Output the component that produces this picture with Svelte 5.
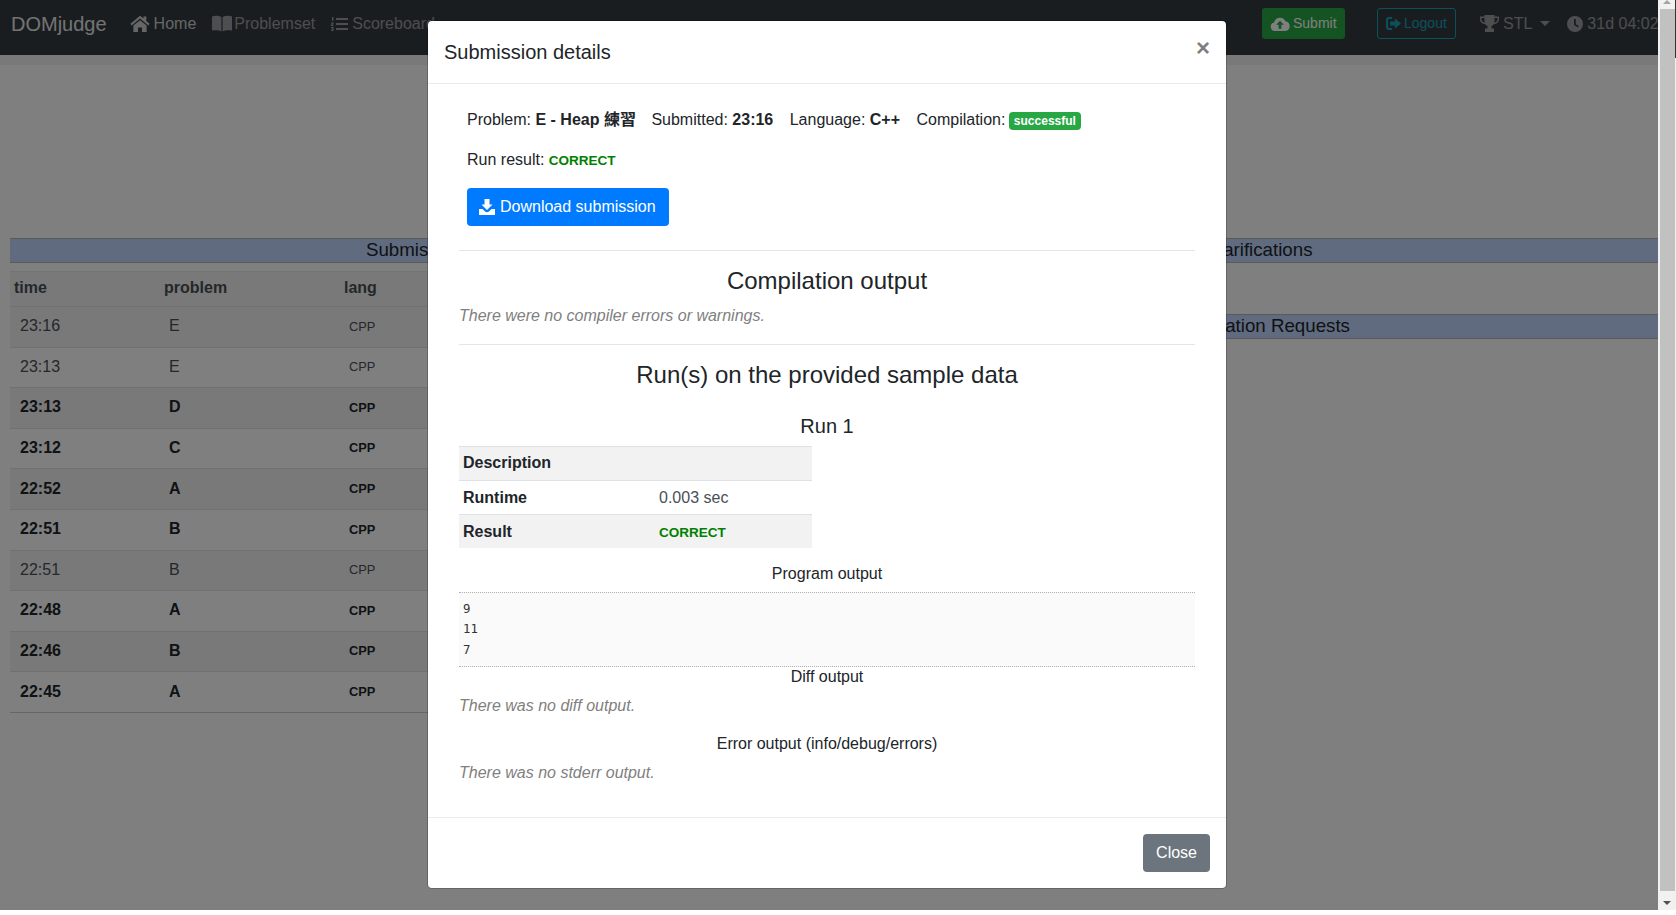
<script>
  const rows = [
    { time: '23:16', prob: 'E', seen: true },
    { time: '23:13', prob: 'E', seen: true },
    { time: '23:13', prob: 'D' },
    { time: '23:12', prob: 'C' },
    { time: '22:52', prob: 'A' },
    { time: '22:51', prob: 'B' },
    { time: '22:51', prob: 'B', seen: true },
    { time: '22:48', prob: 'A' },
    { time: '22:46', prob: 'B' },
    { time: '22:45', prob: 'A' }
  ];
</script>

<div class="screen">
  <div class="page">
    <nav class="navbar">
      <span class="brand">DOMjudge</span>
      <a class="nav-link active">
        <svg class="ico" width="20" height="18" viewBox="0 0 20 18"><path d="M10 .8.4 8.8l1.3 1.6L10 3.6l8.3 6.8 1.3-1.6-3.3-2.8V1.4h-2.8v2.2z"/><path d="M10 5.2 3.4 10.6V17H8v-4.6h4V17h4.6v-6.4z"/></svg>
        Home
      </a>
      <a class="nav-link book">
        <svg class="ico" width="20" height="17" viewBox="0 0 20 17"><path d="M0 1.4C3 .4 7 .6 9.4 2.2V16.4C7 15 3 14.8 0 15.6z"/><path d="M20 1.4C17 .4 13 .6 10.6 2.2V16.4C13 15 17 14.8 20 15.6z"/></svg>
        Problemset
      </a>
      <a class="nav-link">
        <svg class="ico" width="17" height="14" viewBox="0 0 17 14"><path d="M5 1h12v2H5zM5 6h12v2H5zM5 11h12v2H5zM1 0h1.4v4H1zM0 5.5h2.6v1.2L1.4 8h1.2v1H0V7.8l1.2-1.2H0zM0 10h2.6v4H0v-1h1.4v-.5H.6v-1h.8V11H0z"/></svg>
        Scoreboard
      </a>
      <div class="nav-right">
        <a class="btn-nav submit">
          <svg class="ico" width="20" height="15" viewBox="0 0 18 14"><path d="M4.500 14a4 4 0 0 1-1-7.900 5.600 5.600 0 0 1 10.600-1.200A4.600 4.600 0 0 1 14 14z"/><path class="hole" d="M9 4.400 5.400 8.200h2.300V12h2.600V8.200h2.300z"/></svg>
          Submit
        </a>
        <a class="btn-nav logout">
          <svg class="ico" width="15" height="13" viewBox="0 0 15 13"><path d="M6 0v2H3.400C2.600 2 2 2.600 2 3.400v6.200c0 .8.6 1.400 1.400 1.400H6v2H3C1.300 13 0 11.700 0 10V3C0 1.300 1.300 0 3 0z"/><path d="M9 1.500 15 6.500 9 11.500V8.500H4v-4h5z"/></svg>
          Logout
        </a>
        <span class="team">
          <svg class="ico" width="19" height="17" viewBox="0 0 19 17"><path d="M4.500 0h10v1.500H19v3c0 2.500-2.300 4.500-5.200 4.800-.7 1-1.500 1.500-2.300 1.800v2.400h2.500V17h-9v-3.500h2.500v-2.400c-.8-.3-1.600-.8-2.300-1.800C2.300 9 0 7 0 4.500v-3h4.500zM1.500 3v1.500c0 1.500 1.300 2.800 3.400 3.200C4.300 6.500 4.500 4.500 4.500 3zm16 0h-3c0 1.500.2 3.500-.4 4.700 2.100-.4 3.400-1.700 3.400-3.200z" fill-rule="evenodd"/></svg>
          STL
          <i class="caret"></i>
        </span>
        <span class="clock">
          <svg class="ico" width="16" height="16" viewBox="0 0 16 16"><path fill-rule="evenodd" d="M8 0a8 8 0 1 1 0 16A8 8 0 0 1 8 0zM7 3v6l4 2.400.8-1.300L8.800 8.200V3z"/></svg>
          31d 04:02
        </span>
      </div>
    </nav>
    <div class="strip"></div>

    <div class="content">
      <section class="left">
        <h3 class="band">Submissions</h3>
        <table class="subs">
          <colgroup><col class="c1" /><col class="c2" /><col /></colgroup>
          <thead>
            <tr><th>time</th><th>problem</th><th>lang</th></tr>
          </thead>
          <tbody>
            {#each rows as r}
              <tr class:unseen={!r.seen}>
                <td>{r.time}</td>
                <td>{r.prob}</td>
                <td class="lang">CPP</td>
              </tr>
            {/each}
          </tbody>
        </table>
      </section>
      <section class="right">
        <h3 class="band">Clarifications</h3>
        <h3 class="band second">Clarification Requests</h3>
      </section>
    </div>

    <div class="backdrop"></div>

    <div class="modal" role="dialog" aria-modal="true">
      <header class="modal-header">
        <h5>Submission details</h5>
        <span class="x">×</span>
      </header>

      <div class="modal-body">
        <div class="info">
          <p>
            <span class="field first">Problem: <b>E - Heap 練習</b></span>
            <span class="field">Submitted: <b>23:16</b></span>
            <span class="field">Language: <b>C++</b></span>
            <span>Compilation: <span class="badge">successful</span></span>
          </p>
          <p>Run result: <span class="correct">CORRECT</span></p>
          <a class="btn-download">
            <svg width="16" height="16" viewBox="0 0 16 16"><path d="M5.500 0h5v5.500h3L8 11 2.500 5.500h3z"/><path d="M0 10h3.500L6 12.500c1.100 1 2.900 1 4 0L12.500 10H16v6H0z"/></svg>
            Download submission
          </a>
        </div>

        <hr />
        <h3>Compilation output</h3>
        <p class="none">There were no compiler errors or warnings.</p>
        <hr />
        <h3>Run(s) on the provided sample data</h3>
        <h4>Run 1</h4>

        <table class="run">
          <tbody>
            <tr><th>Description</th><td></td></tr>
            <tr><th>Runtime</th><td>0.003 sec</td></tr>
            <tr><th>Result</th><td><span class="correct">CORRECT</span></td></tr>
          </tbody>
        </table>

        <h6>Program output</h6>
        <pre>9
11
7</pre>
        <h6>Diff output</h6>
        <p class="none">There was no diff output.</p>
        <h6>Error output (info/debug/errors)</h6>
        <p class="none">There was no stderr output.</p>
      </div>

      <footer class="modal-footer">
        <a class="btn-close">Close</a>
      </footer>
    </div>
  </div>

  <div class="scrollbar">
    <i class="arrow up"></i>
    <div class="thumb"></div>
    <i class="arrow down"></i>
    <i class="edge"></i>
  </div>
</div>

<style>
:global(body) {
  background: #fff;
  color: #212529;
  font-family: "Liberation Sans", Arial, "Noto Sans CJK TC", sans-serif;
  font-size: 16px;
  line-height: 1.5;
  overflow: hidden;
}

.screen {
  display: flex;
  height: 910px;
  overflow: hidden;
}

.page {
  flex: 1;
  min-width: 0;
  position: relative;
  overflow: hidden;
  background: #fff;
}

.navbar {
  display: flex;
  align-items: center;
  height: 47px;
  padding: 0 0 8px 11px;
  background: #343a40;
  color: rgba(255, 255, 255, 0.5);
  white-space: nowrap;
}

.brand {
  font-size: 20px;
  color: rgba(255, 255, 255, 0.9);
  margin-right: 23px;
}

.nav-link {
  display: flex;
  align-items: center;
  gap: 4px;
  margin-right: 16px;
}

.nav-link.book {
  gap: 2px;
}

.nav-link.active {
  color: rgba(255, 255, 255, 0.75);
}

.ico {
  fill: currentColor;
  flex: none;
}

.nav-right {
  position: absolute;
  left: 1262px;
  top: 8px;
  display: flex;
  align-items: center;
  height: 31px;
}

.btn-nav {
  display: flex;
  align-items: center;
  gap: 3px;
  height: 31px;
  box-sizing: border-box;
  padding: 0 8px;
  border-radius: 3px;
  font-size: 14px;
}

.submit {
  width: 83px;
  background: #28a745;
  color: #fff;
}

.submit .hole {
  fill: #28a745;
}

.logout {
  width: 79px;
  margin-left: 32px;
  border: 1px solid #17a2b8;
  color: #17a2b8;
}

.team {
  display: flex;
  align-items: center;
  gap: 4px;
  margin-left: 24px;
}

.caret {
  margin-left: 4px;
  border-top: 5px solid currentColor;
  border-left: 5px solid transparent;
  border-right: 5px solid transparent;
}

.clock {
  display: flex;
  align-items: center;
  gap: 4px;
  margin-left: 17px;
}

.strip {
  height: 10px;
  background: #f2f2f2;
}

.content {
  display: grid;
  grid-template-columns: 818px 1fr;
  column-gap: 32px;
  padding: 173px 0 0 10px;
}

.band {
  margin: 0;
  height: 25px;
  box-sizing: border-box;
  border-top: 1px solid #b4b4b4;
  border-bottom: 1px solid #b4b4b4;
  background: #c0d6ff;
  font-size: 18.720px;
  font-weight: 400;
  line-height: 21px;
  text-align: center;
}

.band.second {
  margin-top: 51px;
}

.subs {
  width: 100%;
  margin-top: 8px;
  border-collapse: collapse;
  table-layout: fixed;
}

.c1 {
  width: 149px;
}

.c2 {
  width: 180px;
}

.subs th {
  height: 35px;
  box-sizing: border-box;
  padding: 0 5px 3px;
  background: #f2f2f2;
  border-top: 1px solid #e6e6e6;
  text-align: left;
  color: #495057;
}

.subs th:first-child {
  padding-left: 4px;
}

.subs td {
  height: 40.600px;
  box-sizing: border-box;
  padding: 0 10px 1px;
  border-top: 1px solid #dee2e6;
  color: #495057;
}

.subs tbody tr:nth-child(odd) td {
  background: #f2f2f2;
}

.subs tbody tr:last-child td {
  border-bottom: 1px solid #ccc;
}

.subs tr.unseen td {
  font-weight: 700;
  color: #212529;
}

.subs .lang {
  font-size: 12.800px;
}

.backdrop {
  position: absolute;
  inset: 0;
  background: rgba(0, 0, 0, 0.5);
}

.modal {
  position: absolute;
  left: 427px;
  top: 20px;
  width: 800px;
  box-sizing: border-box;
  background: #fff;
  background-clip: padding-box;
  border: 1px solid rgba(0, 0, 0, 0.2);
  border-radius: 4.800px;
}

.modal-header {
  display: flex;
  align-items: flex-start;
  justify-content: space-between;
  padding: 16px;
  border-bottom: 1px solid #e9ecef;
}

.modal-header h5 {
  margin: 0;
  font-size: 20px;
  font-weight: 400;
  line-height: 30px;
}

.x {
  margin-top: -1px;
  font-size: 24px;
  font-weight: 700;
  line-height: 24px;
  color: #000;
  opacity: 0.5;
}

.modal-body {
  padding: 16px 31px;
}

.info {
  padding: 8px 8px 0;
}

.info p {
  margin: 0 0 16px;
  color: #212529;
}

.field {
  margin-right: 12px;
}

.field.first {
  margin-right: 11px;
}

.badge {
  display: inline-block;
  margin-left: -1px;
  padding: 3px 5px;
  border-radius: 4px;
  background: #28a745;
  color: #fff;
  font-size: 12px;
  font-weight: 700;
  line-height: 12px;
  vertical-align: baseline;
}

.correct {
  color: #008000;
  font-size: 13.500px;
  font-weight: 700;
}

.btn-download {
  display: inline-flex;
  align-items: center;
  gap: 5px;
  height: 38px;
  box-sizing: border-box;
  padding: 0 13px 0 12px;
  border-radius: 4px;
  background: #007bff;
  color: #fff;
}

.btn-download svg {
  fill: #fff;
}

hr {
  margin: 24px 0 16px;
  border: 0;
  border-top: 1px solid rgba(0, 0, 0, 0.1);
}

h3 {
  margin: 0 0 8px;
  font-size: 24px;
  font-weight: 400;
  line-height: 1.2;
  text-align: center;
}

h3 + p + hr {
  margin-top: 16px;
}

h4 {
  margin: 24px 0 8px;
  font-size: 20px;
  font-weight: 400;
  line-height: 1.2;
  text-align: center;
}

.run {
  width: 353px;
  margin-bottom: 16px;
  border-collapse: collapse;
}

.run th,
.run td {
  height: 33.300px;
  padding: 0 4px;
  border-top: 1px solid #dee2e6;
  text-align: left;
}

.run th {
  width: 188px;
}

.run td {
  color: #495057;
}

.run tr:nth-child(odd) {
  background: #f2f2f2;
}

h6 {
  margin: 0 0 8px;
  font-size: 16px;
  font-weight: 400;
  line-height: 1.2;
  text-align: center;
}

pre {
  margin: 0;
  padding: 6px 4px 0;
  height: 75px;
  box-sizing: border-box;
  border-top: 1px dotted #b0b0b0;
  border-bottom: 1px dotted #b0b0b0;
  background: #fafafa;
  color: #333;
  font-family: "DejaVu Sans Mono", monospace;
  font-size: 12.300px;
  line-height: 20.800px;
}

.none {
  margin: 0 0 16px;
  color: gray;
  font-style: italic;
}

.modal-footer {
  display: flex;
  justify-content: flex-end;
  padding: 16px;
  border-top: 1px solid #e9ecef;
}

.btn-close {
  display: flex;
  align-items: center;
  height: 38px;
  box-sizing: border-box;
  padding: 0 13px;
  border-radius: 4px;
  background: #6c757d;
  color: #fff;
}

.scrollbar {
  position: relative;
  width: 18px;
  background: #f1f1f1;
}

.thumb {
  position: absolute;
  left: 2px;
  right: 1px;
  top: 9px;
  bottom: 19px;
  background: #c1c1c1;
}

.arrow {
  position: absolute;
  left: 5px;
  border-left: 4px solid transparent;
  border-right: 4px solid transparent;
}

.arrow.up {
  top: 0;
  border-bottom: 4px solid #a3a3a3;
}

.arrow.down {
  bottom: 5px;
  border-top: 4px solid #505050;
}

.edge {
  position: absolute;
  right: 0;
  top: 0;
  width: 1px;
  height: 58px;
  background: #333;
}
</style>
